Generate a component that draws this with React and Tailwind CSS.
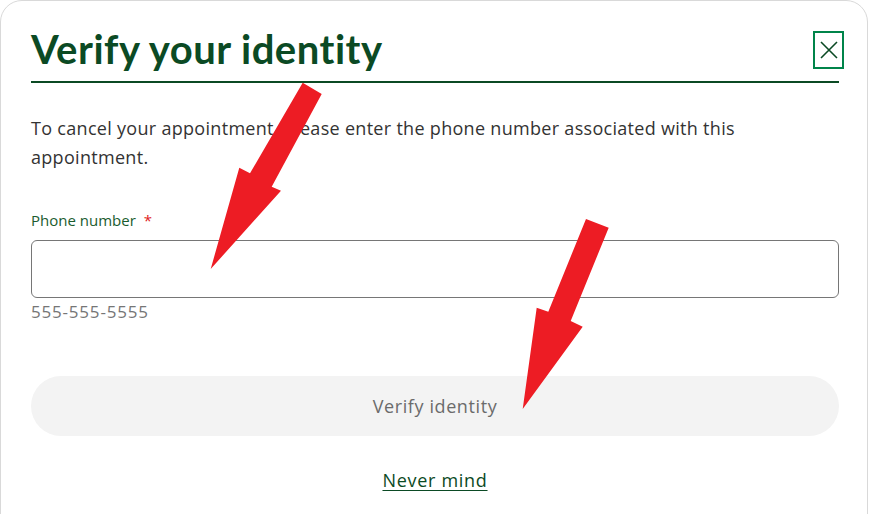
const CloseIcon = () => (
  <svg width="24" height="24" viewBox="0 0 24 24" fill="none">
    <path d="M4 4l16 16M20 4L4 20" stroke="currentColor" strokeWidth="1.6" />
  </svg>
);

// annotation arrows drawn over the dialog
const Arrow = ({ points }) => (
  <polygon points={points} fill="#ed1c24" />
);

export default function App() {
  return (
    <div className="relative h-[514px] w-[870px] overflow-hidden bg-white" style={{ fontFamily: '"Open Sans", sans-serif' }}>
      <div className="h-[540px] w-[868px] rounded-[22px] border border-[#d9d9d9] bg-white pl-[30px] pr-[28px] pt-[24px]">
        <div className="flex items-start justify-between border-b-2 border-[#0b4a24] pb-[8px]">
          <h1 className="font-['Lato',sans-serif] text-[40px] font-bold leading-[48px] tracking-[0.5px] text-[#0b4a24]">
            Verify your identity
          </h1>
          <button className="mr-[-5px] mt-[6px] flex h-[38px] w-[31px] items-center justify-center border-2 border-[#00844a] text-[#0b4a24]">
            <CloseIcon />
          </button>
        </div>

        <p className="mt-[31px] text-[18px] leading-[29px] tracking-[0.3px] text-[#333333]">
          To cancel your appointment, please enter the phone number associated with this appointment.
        </p>

        <label className="mt-[38px] block text-[15px] font-medium leading-[20px] text-[#1a5c2e]">
          Phone number <span className="ml-[4px] text-[#e01b24]">*</span>
        </label>
        <input className="mt-[10px] block h-[58px] w-full rounded-[6px] border border-[#767676] px-3" />
        <div className="mt-[2px] text-[17px] leading-[24px] tracking-[0.8px] text-[#767676]">555-555-5555</div>

        <button className="mt-[52px] block h-[60px] w-full rounded-full bg-[#f3f3f3] text-[18px] font-medium tracking-[0.6px] text-[#6b6b6b]">
          Verify identity
        </button>

        <div className="mt-[30px] text-center">
          <a href="#" className="text-[18px] font-medium leading-[28px] tracking-[0.7px] text-[#0b4a24] underline underline-offset-[3px]">
            Never mind
          </a>
        </div>
      </div>

      <svg className="pointer-events-none absolute left-0 top-0" width="870" height="514">
        <Arrow points="302.7,82.7 321.7,94 271.7,186.7 281,190.7 210.7,269 239.3,167.7 250,173.3" />
        <Arrow points="586,219 608.7,227.7 570.7,321 582.7,326.7 522.7,409 536.7,307.7 548.3,311.7" />
      </svg>
    </div>
  );
}
